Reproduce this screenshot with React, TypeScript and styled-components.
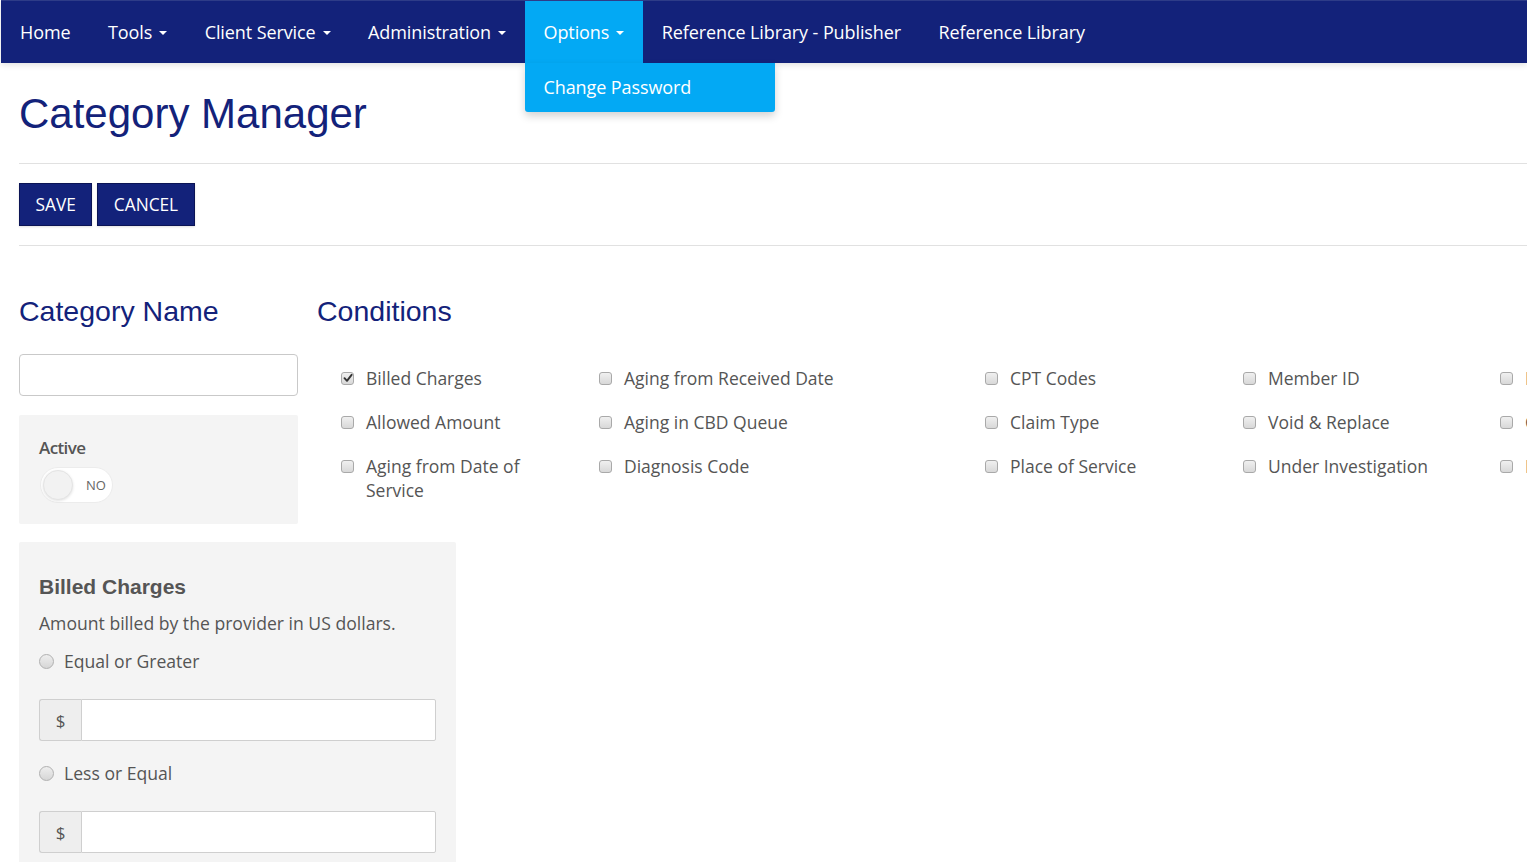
import React from "react";
import styled, { createGlobalStyle } from "styled-components";

const Global = createGlobalStyle`
  html, body { margin: 0; padding: 0; background: #fff; overflow: hidden; }
  body { font-family: "Open Sans", "Liberation Sans", sans-serif; color: #555; }
  * { box-sizing: border-box; }
`;

const NAVY = "#13227a";
const SKY = "#03a9f4";

const Page = styled.div`
  width: 1527px;
  height: 862px;
  overflow: hidden;
  position: relative;
`;

const NavBar = styled.nav`
  margin-left: 1px;
  height: 63px;
  background: ${NAVY};
  border-top: 1px solid #2e3c88;
  display: flex;
  align-items: stretch;
  box-shadow: 0 2px 6px rgba(0, 0, 0, 0.12);
  position: relative;
  z-index: 2;
`;

const NavItem = styled.div<{ $active?: boolean }>`
  position: relative;
  display: flex;
  align-items: center;
  padding: 0 18.5px 1px 19px;
  color: #fff;
  font-size: 18px;
  letter-spacing: -0.1px;
  background: ${(p) => (p.$active ? SKY : "transparent")};
  white-space: nowrap;
`;

const Caret = styled.span`
  display: inline-block;
  width: 0;
  height: 0;
  margin-left: 7px;
  margin-top: 2px;
  border-left: 4.5px solid transparent;
  border-right: 4.5px solid transparent;
  border-top: 4.5px solid #fff;
`;

const Dropdown = styled.div`
  position: absolute;
  left: 0;
  top: 62px;
  width: 250px;
  height: 49px;
  background: ${SKY};
  border-radius: 0 0 3px 3px;
  box-shadow: 0 4px 8px rgba(0, 0, 0, 0.18);
  display: flex;
  align-items: center;
  padding-left: 19px;
  padding-bottom: 2px;
  color: #fff;
  font-size: 18px;
  letter-spacing: -0.1px;
`;

const Content = styled.main`
  padding-left: 19px;
`;

const Title = styled.h1`
  margin: 28px 0 0 0;
  font-family: "Liberation Sans", Arial, sans-serif;
  font-weight: 400;
  font-size: 42px;
  line-height: 46px;
  color: ${NAVY};
`;

const Rule = styled.hr<{ $top: number }>`
  margin: ${(p) => p.$top}px 0 0 0;
  border: 0;
  border-top: 1px solid #e1e1e1;
  height: 0;
`;

const ButtonRow = styled.div`
  display: flex;
  gap: 5px;
  margin-top: 19px;
`;

const Button = styled.button`
  height: 43px;
  padding: 0 15.5px;
  background: ${NAVY};
  border: 1px solid #0b1455;
  color: #fff;
  font-family: "Open Sans", sans-serif;
  font-size: 17.3px;
  box-shadow: 0 1px 2px rgba(0, 0, 0, 0.12);
  cursor: pointer;
`;

const MainRow = styled.div`
  display: flex;
  gap: 19px;
  margin-top: 49px;
`;

const LeftCol = styled.div`
  width: 279px;
  flex: none;
`;

const RightCol = styled.div`
  flex: none;
`;

const SectionHeading = styled.h2`
  margin: 0;
  font-family: "Liberation Sans", Arial, sans-serif;
  font-weight: 400;
  font-size: 28.5px;
  line-height: 32px;
  color: ${NAVY};
`;

const TextInput = styled.input`
  display: block;
  width: 279px;
  height: 42px;
  margin-top: 27px;
  border: 1px solid #c9c9c9;
  border-radius: 4px;
  background: #fff;
  padding: 0 12px;
  font-size: 16px;
`;

const GrayBox = styled.div`
  background: #f4f4f4;
  border-radius: 2px;
`;

const ActiveBox = styled(GrayBox)`
  margin-top: 19px;
  height: 109px;
  padding: 21px 20px 0 20px;
`;

const ActiveLabel = styled.div`
  font-weight: 600;
  font-size: 17px;
  line-height: 24px;
  color: #555;
  letter-spacing: -0.6px;
`;

const Toggle = styled.div`
  margin-top: 7px;
  margin-left: 1px;
  width: 73px;
  height: 36px;
  border-radius: 18px;
  background: #fff;
  border: 1px solid #ececec;
  display: flex;
  align-items: center;
  padding-left: 2px;
  gap: 13px;
`;

const Knob = styled.span`
  width: 30px;
  height: 30px;
  border-radius: 50%;
  background: #f2f2f2;
  border: 1px solid #e4e4e4;
  box-shadow: 0 1px 3px rgba(0, 0, 0, 0.12);
`;

const ToggleText = styled.span`
  font-size: 13px;
  color: #666;
`;

const CondGrid = styled.div`
  margin-top: 39px;
  display: grid;
  grid-template-columns: 258px 386px 258px 257px 258px;
  row-gap: 20px;
`;

const CondItem = styled.label`
  display: flex;
  align-items: flex-start;
  padding-left: 24px;
  padding-right: 14px;
  font-size: 17.5px;
  line-height: 24px;
  color: #555;
  white-space: normal;
`;

const Box = styled.span`
  flex: none;
  width: 13px;
  height: 13px;
  margin-top: 5.5px;
  margin-right: 12px;
  border: 1px solid #a9a9a9;
  border-radius: 3px;
  background: linear-gradient(#f0f0f0, #d8d8d8);
  display: flex;
  align-items: center;
  justify-content: center;
`;

const Panel = styled(GrayBox)`
  margin-top: 18px;
  width: 437px;
  height: 340px;
  padding: 33px 20px 0 20px;
`;

const PanelHeading = styled.h3`
  margin: 0;
  font-family: "Liberation Sans", Arial, sans-serif;
  font-weight: 700;
  font-size: 21px;
  line-height: 24px;
  color: #555;
`;

const PanelText = styled.p`
  margin: 12px 0 0 0;
  font-size: 17.6px;
  line-height: 24px;
  color: #555;
`;

const RadioRow = styled.label<{ $top: number }>`
  display: flex;
  align-items: center;
  margin-top: ${(p) => p.$top}px;
  font-size: 17.6px;
  line-height: 24px;
  color: #555;
`;

const Radio = styled.span`
  width: 15px;
  height: 15px;
  border-radius: 50%;
  border: 1px solid #b0b0b0;
  background: linear-gradient(#eeeeee, #d6d6d6);
  margin-right: 10px;
`;

const InputGroup = styled.div`
  display: flex;
  margin-top: 26px;
  width: 397px;
  height: 42px;
`;

const Addon = styled.span`
  width: 42px;
  flex: none;
  background: #eeeeee;
  border: 1px solid #cfcfcf;
  border-right: 0;
  border-radius: 3px 0 0 3px;
  display: flex;
  align-items: center;
  justify-content: center;
  font-size: 17px;
  color: #555;
`;

const GroupInput = styled.input`
  flex: 1;
  border: 1px solid #cfcfcf;
  border-radius: 0 2px 2px 0;
  background: #fff;
`;

const Check = () => (
  <svg width="10" height="10" viewBox="0 0 10 10">
    <path d="M1.5 5.2 L4 7.8 L8.6 1.8" fill="none" stroke="#333" strokeWidth="1.9" strokeLinecap="round" strokeLinejoin="round" />
  </svg>
);

const conditions: { label: string; checked?: boolean }[] = [
  { label: "Billed Charges", checked: true },
  { label: "Aging from Received Date" },
  { label: "CPT Codes" },
  { label: "Member ID" },
  { label: "Provider ID" },
  { label: "Allowed Amount" },
  { label: "Aging in CBD Queue" },
  { label: "Claim Type" },
  { label: "Void & Replace" },
  { label: "Claim Status" },
  { label: "Aging from Date of Service" },
  { label: "Diagnosis Code" },
  { label: "Place of Service" },
  { label: "Under Investigation" },
  { label: "Provider Type" },
];

const navItems: { label: string; caret?: boolean; active?: boolean }[] = [
  { label: "Home" },
  { label: "Tools", caret: true },
  { label: "Client Service", caret: true },
  { label: "Administration", caret: true },
  { label: "Options", caret: true, active: true },
  { label: "Reference Library - Publisher" },
  { label: "Reference Library" },
];

export default function App() {
  return (
    <Page>
      <Global />
      <NavBar>
        {navItems.map((n) => (
          <NavItem key={n.label} $active={n.active}>
            {n.label}
            {n.caret && <Caret />}
            {n.active && <Dropdown>Change Password</Dropdown>}
          </NavItem>
        ))}
      </NavBar>
      <Content>
        <Title>Category Manager</Title>
        <Rule $top={26} />
        <ButtonRow>
          <Button>SAVE</Button>
          <Button>CANCEL</Button>
        </ButtonRow>
        <Rule $top={19} />
        <MainRow>
          <LeftCol>
            <SectionHeading>Category Name</SectionHeading>
            <TextInput />
            <ActiveBox>
              <ActiveLabel>Active</ActiveLabel>
              <Toggle>
                <Knob />
                <ToggleText>NO</ToggleText>
              </Toggle>
            </ActiveBox>
          </LeftCol>
          <RightCol>
            <SectionHeading>Conditions</SectionHeading>
            <CondGrid>
              {conditions.map((c) => (
                <CondItem key={c.label}>
                  <Box>{c.checked && <Check />}</Box>
                  <span>{c.label}</span>
                </CondItem>
              ))}
            </CondGrid>
          </RightCol>
        </MainRow>
        <Panel>
          <PanelHeading>Billed Charges</PanelHeading>
          <PanelText>Amount billed by the provider in US dollars.</PanelText>
          <RadioRow $top={14}>
            <Radio />
            Equal or Greater
          </RadioRow>
          <InputGroup>
            <Addon>$</Addon>
            <GroupInput />
          </InputGroup>
          <RadioRow $top={20}>
            <Radio />
            Less or Equal
          </RadioRow>
          <InputGroup>
            <Addon>$</Addon>
            <GroupInput />
          </InputGroup>
        </Panel>
      </Content>
    </Page>
  );
}
